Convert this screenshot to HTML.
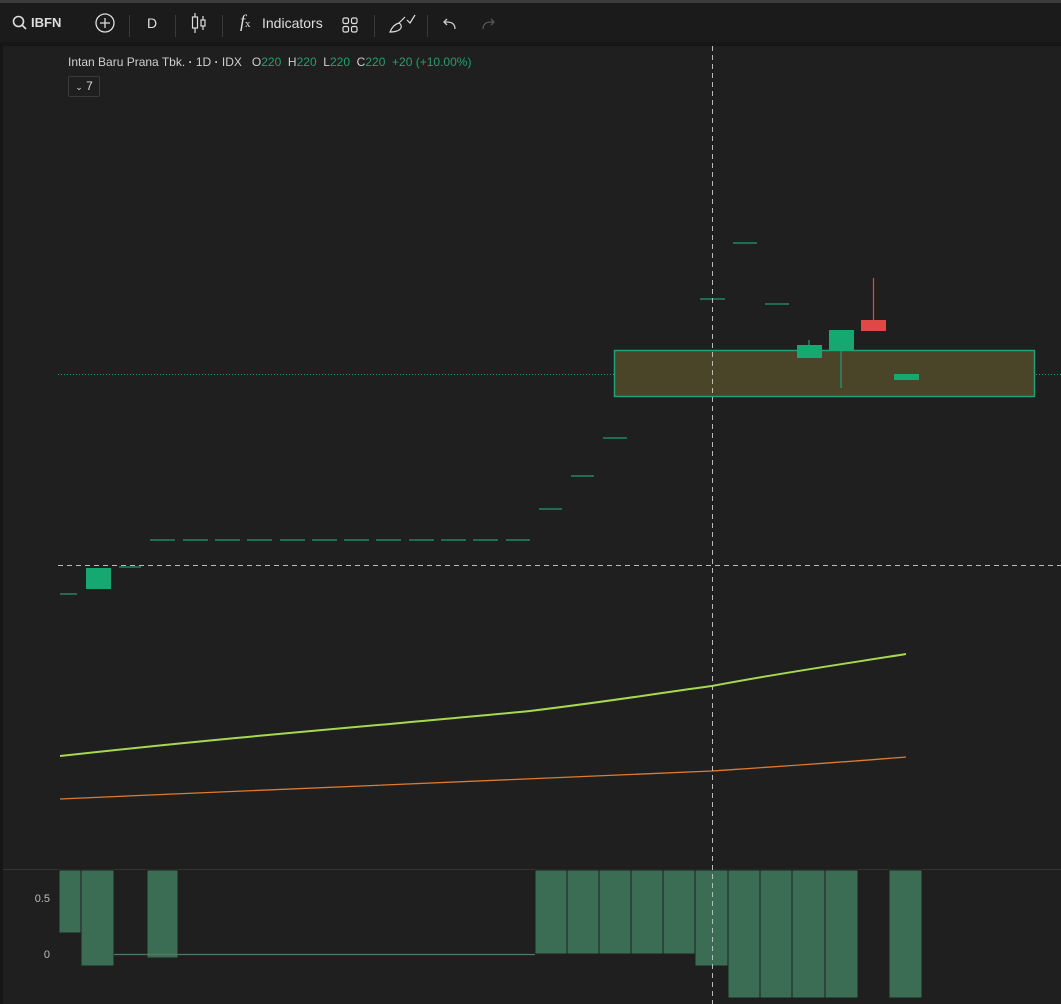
<!DOCTYPE html>
<html><head><style>
body{margin:0;width:1061px;height:1004px;background:#161616;overflow:hidden;font-family:"Liberation Sans",sans-serif;position:relative}
.tb{position:absolute;left:0;top:3px;width:1061px;height:39px;background:#1b1b1b}
.t{position:absolute;color:#ddd;font-size:14px}
.sep{position:absolute;top:12px;width:1px;height:22px;background:#3a3a3a}
</style></head><body>
<div style="position:absolute;left:0;top:0;width:1061px;height:3px;background:#3c3c3c"></div>
<div class="tb">
<svg style="position:absolute;left:12px;top:12px" width="16" height="16"><circle cx="6.5" cy="6.5" r="5" fill="none" stroke="#ddd" stroke-width="1.6"/><line x1="10" y1="10" x2="14" y2="14" stroke="#ddd" stroke-width="1.6"/></svg>
<div class="t" style="left:31px;top:12px;font-weight:bold;font-size:13px">IBFN</div>
<svg style="position:absolute;left:95px;top:10px" width="20" height="20"><circle cx="10" cy="10" r="9" fill="none" stroke="#ddd" stroke-width="1.3"/><path d="M10 5v10M5 10h10" stroke="#ddd" stroke-width="1.3"/></svg>
<div class="sep" style="left:129px"></div>
<div class="t" style="left:147px;top:12px;font-size:14px">D</div>
<div class="sep" style="left:175px"></div>
<svg style="position:absolute;left:190px;top:9px" width="18" height="22"><path d="M5 1v20M13 4v14" stroke="#ddd" stroke-width="1.2"/><rect x="2.5" y="5" width="5" height="11" fill="#1b1b1b" stroke="#ddd" stroke-width="1.2"/><rect x="11" y="8" width="4" height="6" fill="#1b1b1b" stroke="#ddd" stroke-width="1.2"/></svg>
<div class="sep" style="left:222px"></div>
<div class="t" style="left:240px;top:8px;font-family:'Liberation Serif',serif;font-style:italic;font-size:18px">f<span style="font-size:11px;font-style:normal">x</span></div>
<div class="t" style="left:262px;top:12px">Indicators</div>
<svg style="position:absolute;left:342px;top:14px" width="16" height="16"><rect x="1" y="1" width="5.5" height="5.5" rx="1.5" fill="none" stroke="#ddd" stroke-width="1.2"/><rect x="9.5" y="1" width="5.5" height="5.5" rx="1.5" fill="none" stroke="#ddd" stroke-width="1.2"/><rect x="1" y="9.5" width="5.5" height="5.5" rx="1.5" fill="none" stroke="#ddd" stroke-width="1.2"/><rect x="9.5" y="9.5" width="5.5" height="5.5" rx="1.5" fill="none" stroke="#ddd" stroke-width="1.2"/></svg>
<div class="sep" style="left:374px"></div>
<svg style="position:absolute;left:388px;top:9px" width="28" height="22"><path d="M2 20c2-5 5-8 9-9 3 2 3 5 0 7-3 2-6 2-9 2zM11 11l6-6M19 8l3 3 5-8" fill="none" stroke="#ddd" stroke-width="1.2"/></svg>
<div class="sep" style="left:427px"></div>
<svg style="position:absolute;left:442px;top:14px" width="16" height="14"><path d="M13 12c0-5-3-7-8-7H2M5 2L2 5l3 3" fill="none" stroke="#ccc" stroke-width="1.3"/></svg>
<svg style="position:absolute;left:480px;top:14px" width="16" height="14"><path d="M3 12c0-5 3-7 8-7h3M11 2l3 3-3 3" fill="none" stroke="#555" stroke-width="1.3"/></svg>
</div>
<div style="position:absolute;left:3px;top:46px;width:1058px;height:958px;background:#1f1f1f"></div>
<div style="position:absolute;left:68px;top:55px;font-size:12px;color:#cfcfcf;white-space:nowrap">Intan Baru Prana Tbk. <b>·</b> 1D <b>·</b> IDX &nbsp; O<span style="color:#22a06b">220</span> &nbsp;H<span style="color:#22a06b">220</span> &nbsp;L<span style="color:#22a06b">220</span> &nbsp;C<span style="color:#22a06b">220</span> &nbsp;<span style="color:#22a06b">+20 (+10.00%)</span></div>
<div style="position:absolute;left:68px;top:76px;width:30px;height:19px;border:1px solid #3a3a3a;border-radius:2px;color:#ddd;font-size:12px;line-height:19px;text-align:center"><span style="font-size:9px">⌄</span> 7</div>
<svg style="position:absolute;left:0;top:0" width="1061" height="1004">
<line x1="3" y1="869.5" x2="1061" y2="869.5" stroke="#333"/>
<line x1="58" y1="374.5" x2="1061" y2="374.5" stroke="#1f9a70" stroke-dasharray="1 2"/>
<rect x="614.5" y="350.5" width="420" height="46" fill="#4a4428" stroke="#1fa080" stroke-width="1.5"/>
<g stroke="#1f9a70" stroke-width="1.3">
<line x1="60" y1="594" x2="77" y2="594"/><line x1="119" y1="567" x2="141" y2="567"/>
<line x1="150" y1="540" x2="175" y2="540"/><line x1="183" y1="540" x2="208" y2="540"/><line x1="215" y1="540" x2="240" y2="540"/><line x1="247" y1="540" x2="272" y2="540"/><line x1="280" y1="540" x2="305" y2="540"/><line x1="312" y1="540" x2="337" y2="540"/><line x1="344" y1="540" x2="369" y2="540"/><line x1="376" y1="540" x2="401" y2="540"/><line x1="409" y1="540" x2="434" y2="540"/><line x1="441" y1="540" x2="466" y2="540"/><line x1="473" y1="540" x2="498" y2="540"/><line x1="506" y1="540" x2="530" y2="540"/>
<line x1="539" y1="509" x2="562" y2="509"/><line x1="571" y1="476" x2="594" y2="476"/><line x1="603" y1="438" x2="627" y2="438"/>
<line x1="700" y1="299" x2="725" y2="299"/><line x1="733" y1="243" x2="757" y2="243"/><line x1="765" y1="304" x2="789" y2="304"/>
<line x1="809" y1="340" x2="809" y2="346"/><line x1="841" y1="350" x2="841" y2="388"/>
</g>
<rect x="86" y="568" width="25" height="21" fill="#15a870"/>
<rect x="797" y="345" width="25" height="13" fill="#15a870"/>
<rect x="829" y="330" width="25" height="21" fill="#15a870"/>
<line x1="873.5" y1="278" x2="873.5" y2="320" stroke="#e04848" stroke-width="1.2"/>
<rect x="861" y="320" width="25" height="11" fill="#e04848"/>
<rect x="894" y="374" width="25" height="6" fill="#15a870"/>
<path d="M60 756 C250 735 420 722 530 711 C620 700 680 690 712 686 C780 673 850 663 906 654" fill="none" stroke="#a6d94f" stroke-width="2"/>
<path d="M60 799 C300 788 550 780 712 771 C800 765 860 761 906 757" fill="none" stroke="#e07a2e" stroke-width="1.3"/>
<line x1="58" y1="565.5" x2="1061" y2="565.5" stroke="#bbb" stroke-dasharray="5 4"/>
<g fill="#3b6d55" stroke="#1f1f1f" stroke-width="1">
<rect x="59" y="870" width="22" height="63"/><rect x="81" y="870" width="33" height="96"/>
<rect x="147" y="870" width="31" height="88"/>
<rect x="535" y="870" width="32" height="84"/><rect x="567" y="870" width="32" height="84"/><rect x="599" y="870" width="32" height="84"/><rect x="631" y="870" width="32" height="84"/><rect x="663" y="870" width="32" height="84"/>
<rect x="695" y="870" width="33" height="96"/>
<rect x="728" y="870" width="32" height="128"/><rect x="760" y="870" width="32" height="128"/><rect x="792" y="870" width="33" height="128"/><rect x="825" y="870" width="33" height="128"/>
<rect x="889" y="870" width="33" height="128"/>
</g>
<line x1="114" y1="954.5" x2="535" y2="954.5" stroke="#4f7a65" stroke-width="1.2"/>
<line x1="712.5" y1="46" x2="712.5" y2="1004" stroke="#bbb" stroke-dasharray="5 4"/>
<text x="50" y="902" fill="#bbb" font-size="11" text-anchor="end" font-family="Liberation Sans">0.5</text>
<text x="50" y="958" fill="#bbb" font-size="11" text-anchor="end" font-family="Liberation Sans">0</text>
</svg>
</body></html>
